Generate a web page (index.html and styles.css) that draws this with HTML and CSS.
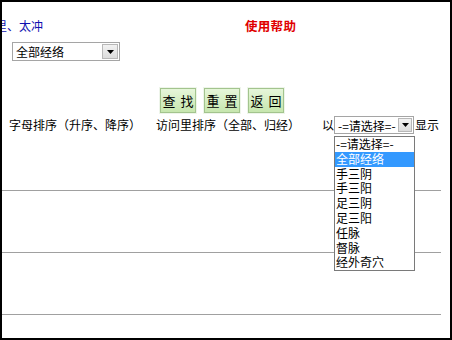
FILE: index.html
```html
<!DOCTYPE html>
<html lang="zh-CN">
<head>
<meta charset="utf-8">
<title>经络穴位</title>
<link rel="stylesheet" href="styles.css">
</head>
<body>
<div class="frame">
  <div class="top-row">
    <span class="crumb">里、太冲</span>
    <span class="help">使用帮助</span>
  </div>
  <div class="filter-row">
    <div class="combo combo-wide">
      <span class="combo-text">全部经络</span>
      <span class="combo-btn"><svg width="7" height="4" viewBox="0 0 7 4"><path d="M0 0h7L3.5 4z" fill="#000"/></svg></span>
    </div>
  </div>
  <div class="btn-row">
    <button class="btn">查 找</button>
    <button class="btn">重 置</button>
    <button class="btn">返 回</button>
  </div>
  <div class="sort-row">
    <span class="sort-a">字母排序（升序、降序）</span>
    <span class="sort-b">访问里排序（全部、归经）</span>
    <span class="yi">以</span>
    <div class="combo combo-small">
      <span class="combo-text">-=请选择=-</span>
      <span class="combo-btn"><svg width="7" height="4" viewBox="0 0 7 4"><path d="M0 0h7L3.5 4z" fill="#000"/></svg></span>
      <ul class="dropdown">
        <li>-=请选择=-</li>
        <li class="selected">全部经络</li>
        <li>手三阴</li>
        <li>手三阳</li>
        <li>足三阴</li>
        <li>足三阳</li>
        <li>任脉</li>
        <li>督脉</li>
        <li>经外奇穴</li>
      </ul>
    </div>
    <span class="show">显示</span>
  </div>
  <div class="rule rule-first"></div>
  <div class="rule"></div>
  <div class="rule"></div>
</div>
</body>
</html>
```
FILE: styles.css
```css
* { box-sizing: border-box; }
html, body { margin: 0; padding: 0; background: #fff; }
body {
  font-family: "Noto Sans CJK SC", "Liberation Sans", sans-serif;
  font-size: 12px;
  color: #000;
}
.frame {
  width: 452px;
  height: 340px;
  border: 2px solid #000;
  overflow: hidden;
  position: relative;
}
.top-row {
  display: flex;
  margin-top: 16px;
  height: 16px;
  line-height: 16px;
  align-items: center;
}
.crumb {
  width: 250px;
  margin-left: -7px;
  color: #1010b0;
  flex: none;
}
.help {
  color: #e00000;
  font-weight: bold;
  font-size: 12.5px;
  letter-spacing: 0.3px;
}
.filter-row {
  margin-top: 8px;
  margin-left: 10px;
  height: 19px;
}
.combo {
  position: relative;
  display: flex;
  align-items: center;
  border: 1px solid #a5a5a5;
  background: #fff;
  height: 19px;
}
.combo-wide { width: 108px; }
.combo-text {
  flex: 1;
  padding-left: 3px;
  line-height: 17px;
  white-space: nowrap;
}
.combo-btn {
  width: 16px;
  height: 15px;
  margin-right: 1px;
  background: linear-gradient(#f2f2f2, #dcdcdc);
  border: 1px solid #b8b8b8;
  display: flex;
  align-items: center;
  justify-content: center;
}
.btn-row {
  display: flex;
  gap: 8px;
  margin-top: 27px;
  margin-left: 158px;
}
.btn {
  width: 36px;
  height: 25px;
  padding: 0;
  font-family: inherit;
  font-size: 13px;
  color: #000;
  background: linear-gradient(#e6f6da, #c6e6ae);
  border: 1px solid #a3c48e;
  box-shadow: 0 0 0 1px #eef5ea;
  line-height: 23px;
  word-spacing: 2px;
  white-space: pre;
}
.sort-row {
  display: flex;
  align-items: center;
  margin-top: 3px;
  height: 18px;
  line-height: 18px;
  white-space: nowrap;
}
.sort-a { margin-left: 7px; width: 147px; }
.sort-b { width: 166px; }
.yi { width: 12px; }
.combo-small { width: 80px; height: 18px; }
.combo-small .combo-btn { height: 14px; width: 14px; }
.show { margin-left: 1px; }
.dropdown {
  position: absolute;
  top: 19px;
  left: -1px;
  width: 81px;
  margin: 0;
  padding: 0;
  list-style: none;
  border: 1px solid #7a7a7a;
  background: #fff;
  z-index: 2;
}
.dropdown li {
  height: 14.8px;
  line-height: 14.8px;
  padding-left: 1px;
  font-size: 12px;
}
.dropdown .selected {
  background: #3399ff;
  color: #fff;
}
.rule {
  height: 1px;
  background: #a0a0a0;
  margin-right: 9px;
  margin-top: 61px;
}
.rule-first { margin-top: 56px; }
```
